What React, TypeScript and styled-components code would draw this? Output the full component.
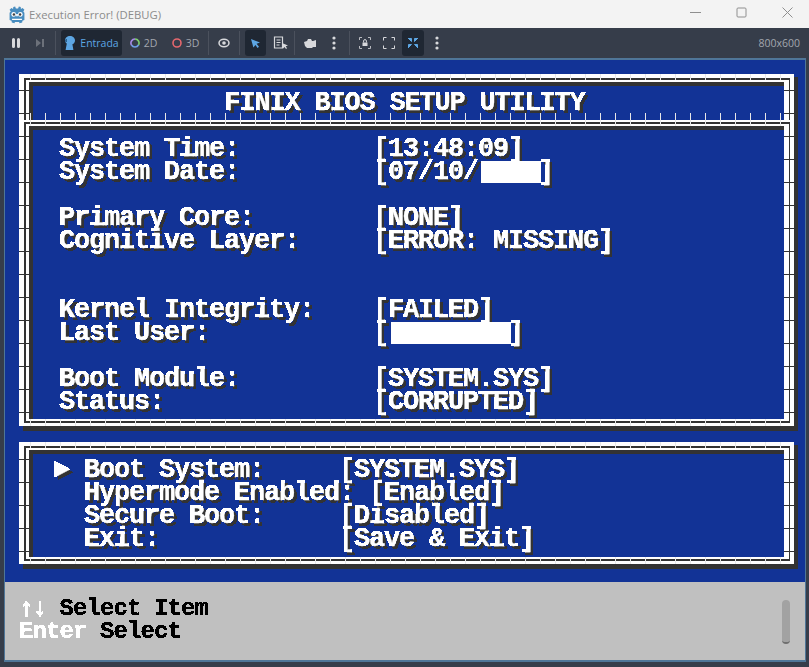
import styled, { createGlobalStyle } from "styled-components";

const GlobalStyle = createGlobalStyle`
  html, body {
    margin: 0;
    padding: 0;
    background: #363d4a;
    overflow: hidden;
  }
`;

const Window = styled.div`
  width: 809px;
  height: 667px;
  display: flex;
  flex-direction: column;
  background: #363d4a;
  overflow: hidden;
`;

const TitleBar = styled.div`
  height: 28px;
  background: #f3f3f3;
  display: flex;
  align-items: center;
  padding-left: 7px;
  font-family: "Open Sans", "Liberation Sans", sans-serif;
  font-size: 11.3px;
  color: #8c8c8c;
`;

const TitleText = styled.span`
  margin-left: 2px;
  flex: 1;
`;

const WindowButton = styled.div`
  width: 46px;
  height: 24px;
  box-sizing: border-box;
  padding-left: 2px;
  display: flex;
  align-items: center;
  justify-content: center;
  margin-top: -4px;
  color: #8f8f8f;
`;

const Toolbar = styled.div`
  height: 30px;
  display: flex;
  align-items: center;
  padding: 0 9px 0 5px;
  font-family: "Open Sans", "Liberation Sans", sans-serif;
  font-size: 10.5px;
  color: #a3a7ae;
`;

const ToolGroup = styled.div<{ $gap?: number }>`
  display: flex;
  align-items: center;
  gap: ${({ $gap }) => $gap ?? 2}px;
`;

const ToolButton = styled.div<{ $w?: number; $active?: boolean }>`
  width: ${({ $w }) => $w ?? 22}px;
  height: 26px;
  display: flex;
  align-items: center;
  justify-content: center;
  gap: 4px;
  border-radius: 3px;
  background: ${({ $active }) => ($active ? "#1f2733" : "transparent")};
  color: ${({ $active }) => ($active ? "#5da6e3" : "inherit")};
`;

const ToolSeparator = styled.div<{ $l: number; $r: number }>`
  width: 1px;
  height: 24px;
  background: #4b515d;
  margin: 0 ${({ $r }) => $r}px 0 ${({ $l }) => $l}px;
`;

const ResolutionLabel = styled.span`
  margin-left: auto;
`;

const Viewport = styled.div`
  width: 800px;
  height: 600px;
  margin-left: 4px;
  border: solid #4f7698;
  border-width: 2px 1px 2px 1px;
  display: flex;
  flex-direction: column;
`;

const BlueScreen = styled.div`
  height: 522px;
  box-sizing: border-box;
  padding: 14px 11px 0 14px;
  background: #123396;
  color: #ffffff;
  font-family: "Liberation Mono", monospace;
  font-weight: bold;
  font-size: 27px;
  letter-spacing: -1.2px;
  line-height: 23px;
  white-space: pre;
`;

const BoxOuter = styled.div<{ $tight?: boolean; $open?: boolean; $seam?: number; $gapAbove?: number }>`
  position: relative;
  margin-top: ${({ $gapAbove }) => $gapAbove ?? 0}px;
  border: solid #ffffff;
  border-width: ${({ $tight, $open }) => `${$tight ? 2 : 4}px 4px ${$open ? 0 : 3}px 5px`};
  box-shadow: 4px 3px 0 #333333, 4px 5px 0 #333333;

  /* seams between the box-drawing tiles */
  &::before {
    content: "";
    position: absolute;
    pointer-events: none;
    z-index: 1;
    inset: ${({ $tight, $open }) => `${$tight ? -2 : -4}px -4px ${$open ? 0 : -3}px -5px`};
    background-image:
      linear-gradient(to bottom, transparent 22px, #333333 22px),
      linear-gradient(to bottom, transparent 22px, #333333 22px),
      linear-gradient(to right, #e8e8e8 1px, transparent 1px),
      linear-gradient(to right, #e8e8e8 1px, transparent 1px);
    background-size: 10px 23px, 10px 23px, 15px 6px, 15px 7px;
    background-repeat: repeat-y, repeat-y, repeat-x, repeat-x;
    background-position:
      0 ${({ $seam }) => $seam ?? -6}px,
      100% ${({ $seam }) => $seam ?? -6}px,
      11px 0,
      11px 100%;
  }
`;

const BoxMiddle = styled.div<{ $open?: boolean }>`
  border: solid #333333;
  border-width: ${({ $open }) => `2px 1px ${$open ? 0 : 2}px 2px`};
`;

const BoxInner = styled.div<{ $open?: boolean }>`
  border: solid #ffffff;
  border-width: ${({ $open }) => `2px 5px ${$open ? 0 : 2}px 3px`};
`;

const BoxContent = styled.div<{ $h: number; $pad: string }>`
  box-sizing: border-box;
  height: ${({ $h }) => $h + 4}px;
  border-top: 4px solid #333333;
  border-left: 4px solid #333333;
  padding: ${({ $pad }) => $pad};
  background: #123396;
`;

const Crisp = styled.div`
  filter: url(#crisp-edges);
  text-shadow: 3px 3px 0 #333333;
  -webkit-text-stroke: 0.35px currentColor;
`;

const HeaderText = styled(Crisp)`
  text-align: center;
  padding-right: 8px;
`;

const InfoGrid = styled(Crisp)`
  display: grid;
  grid-template-columns: 314px 1fr;
  grid-auto-rows: 23px;
`;

const Redacted = styled.span<{ $chars: number }>`
  display: inline-block;
  vertical-align: top;
  width: ${({ $chars }) => $chars * 15}px;
  height: 22px;
  margin: 0 -3px 0 3px;
  background: #ffffff;
`;

const BlankRow = styled.div`
  grid-column: 1 / -1;
`;

const MenuRow = styled.div``;

const StatusPanel = styled.div`
  height: 78px;
  box-sizing: border-box;
  padding: 15px 15px 0 14px;
  background: #c0c0c0;
  color: #000000;
  display: flex;
  justify-content: space-between;
  align-items: flex-start;
  font-family: "Liberation Mono", monospace;
  font-weight: bold;
  font-size: 24px;
  letter-spacing: -0.9px;
  line-height: 23px;
  white-space: pre;
`;

const KeyHints = styled(Crisp)`
  text-shadow: none;
`;

const HintKey = styled.span`
  color: #ffffff;
`;

const HintArrows = styled(HintKey)`
  -webkit-text-stroke: 1.4px #ffffff;
`;

const ScrollThumb = styled.div`
  width: 8px;
  height: 44px;
  margin: 3px 0 0 0;
  border-radius: 4px;
  background: #a2a2a2;
  border-bottom: 2px solid #6f6f6f;
  box-sizing: border-box;
`;

const HiddenDefs = styled.svg`
  position: absolute;
  width: 0;
  height: 0;
`;

function GodotLogo() {
  return (
    <svg width="20" height="21" viewBox="0 0 16 17">
      <path d="M5 2.5 6.5 2l.6 1.6h1.8L9.5 2l1.5.5.2 1.6 1.3-.9 1.5 1.4-.9 1.4.9 1v6l-1.6.6-.2 1.4-2.2.6-.3-1.1H6.3l-.3 1.1-2.2-.6-.2-1.4L2 13V7l.9-1-.9-1.4 1.5-1.4 1.3.9z" fill="#478cbf" />
      <circle cx="5.3" cy="8.4" r="1.9" fill="#fff" />
      <circle cx="10.7" cy="8.4" r="1.9" fill="#fff" />
      <circle cx="5.5" cy="8.5" r="1" fill="#414042" />
      <circle cx="10.5" cy="8.5" r="1" fill="#414042" />
      <path d="M7.3 8h1.4v2H7.3zM4 12h8v1H4z" fill="#fff" />
    </svg>
  );
}

function MinimizeIcon() {
  return (
    <svg width="11" height="11" viewBox="0 0 11 11"><path d="M0 5.5h11" stroke="currentColor" fill="none" /></svg>
  );
}

function MaximizeIcon() {
  return (
    <svg width="11" height="11" viewBox="0 0 11 11"><rect x="1" y="1" width="9" height="9" rx="1" stroke="currentColor" fill="none" /></svg>
  );
}

function CloseIcon() {
  return (
    <svg width="11" height="11" viewBox="0 0 11 11"><path d="M.5.5l10 10M10.5.5l-10 10" stroke="currentColor" fill="none" /></svg>
  );
}

function PauseIcon() {
  return (
    <svg width="10" height="10" viewBox="0 0 10 10"><path d="M1 1.5a1 1 0 0 1 3 0v7a1 1 0 0 1-3 0zM6 1.5a1 1 0 0 1 3 0v7a1 1 0 0 1-3 0z" fill="#d8d9dc" /></svg>
  );
}

function StepIcon() {
  return (
    <svg width="10" height="10" viewBox="0 0 10 10"><path d="M1 1l5 4-5 4zM7 1h2v8H7z" fill="#6c717a" /></svg>
  );
}

function PersonIcon() {
  return (
    <svg width="12" height="16" viewBox="0 0 12 16">
      <path d="M6 1C3.2 1 1 3 1 5.3c0 1.3.6 2.5 1.8 3.3L1.6 15h7.8L8.4 9.2C10 8.6 11 7.2 11 5.4 11 3 8.8 1 6 1z" fill="#5da6e3" />
      <path d="M1 5c.6-.8 1.2-1 2-1v3L1.5 7z" fill="#2c5f8a" />
    </svg>
  );
}

function RingIcon({ color, gradient }: { color?: string; gradient?: boolean }) {
  return (
    <svg width="10" height="10" viewBox="0 0 10 10">
      {gradient ? (
        <>
          <path d="M5 1a4 4 0 0 1 3.5 6" stroke="#7fd16f" strokeWidth="1.6" fill="none" />
          <path d="M8.5 7A4 4 0 0 1 1.5 7" stroke="#6f9fe8" strokeWidth="1.6" fill="none" />
          <path d="M1.5 7A4 4 0 0 1 5 1" stroke="#a98be8" strokeWidth="1.6" fill="none" />
        </>
      ) : (
        <circle cx="5" cy="5" r="4" stroke={color} strokeWidth="1.6" fill="none" />
      )}
    </svg>
  );
}

function EyeIcon() {
  return (
    <svg width="12" height="10" viewBox="0 0 12 10">
      <ellipse cx="6" cy="5" rx="5" ry="3.8" stroke="#d8d9dc" strokeWidth="1.5" fill="none" />
      <circle cx="6" cy="5" r="1.8" fill="#d8d9dc" />
    </svg>
  );
}

function PointerIcon() {
  return (
    <svg width="11" height="11" viewBox="0 0 11 11"><path d="M1 1l9 3.4-3.4 1.4 2.4 3L7.6 10 5.4 7l-2 2.6z" fill="#5da6e3" /></svg>
  );
}

function ListSelectIcon() {
  return (
    <svg width="16" height="14" viewBox="0 0 16 14">
      <path d="M1.5 1h8v11h-8zM3.5 4h4M3.5 6.5h4M3.5 9h3" stroke="#d8d9dc" strokeWidth="1.2" fill="none" />
      <path d="M9 7l6 2.4-2.3.9 1.3 2-1 .7-1.4-2-1.3 1.6z" fill="#d8d9dc" />
    </svg>
  );
}

function CameraIcon() {
  return (
    <svg width="12" height="10" viewBox="0 0 12 10"><path d="M0 4l3-1 1-2h3l1 2h1l3-1v7H9l-1 1H3L1 8z" fill="#d8d9dc" /></svg>
  );
}

function DotsIcon() {
  return (
    <svg width="4" height="14" viewBox="0 0 4 14">
      <circle cx="2" cy="2" r="1.6" fill="#d8d9dc" />
      <circle cx="2" cy="7" r="1.6" fill="#d8d9dc" />
      <circle cx="2" cy="12" r="1.6" fill="#d8d9dc" />
    </svg>
  );
}

function LockFrameIcon() {
  return (
    <svg width="12" height="12" viewBox="0 0 12 12">
      <path d="M.5 3V.5H3M9 .5h2.5V3M11.5 9v2.5H9M3 11.5H.5V9" stroke="#b9bbc0" fill="none" />
      <path d="M3.5 5.5h5v3.5h-5z" fill="#d8d9dc" />
      <path d="M4.6 5.5V4a1.4 1.4 0 0 1 2.8 0v1.5" stroke="#d8d9dc" fill="none" />
    </svg>
  );
}

function ExpandIcon() {
  return (
    <svg width="12" height="12" viewBox="0 0 12 12">
      <path d="M.5 3.5V.5h3M8.5.5h3v3M11.5 8.5v3h-3M3.5 11.5h-3v-3" stroke="#d8d9dc" fill="none" />
    </svg>
  );
}

function ShrinkIcon() {
  return (
    <svg width="12" height="12" viewBox="0 0 12 12">
      <path d="M1 1l3.5 3.5V1.5H1.5zM11 1L7.5 4.5V1.5H10.5zM11 11L7.5 7.5h3v3zM1 11l3.5-3.5h-3v3z" fill="#5da6e3" stroke="#5da6e3" />
    </svg>
  );
}

export default function App() {
  return (
    <Window>
      <GlobalStyle />
      <HiddenDefs aria-hidden="true">
        <filter id="crisp-edges" colorInterpolationFilters="sRGB" x="0" y="0" width="100%" height="100%">
          <feComponentTransfer>
            <feFuncA type="discrete" tableValues="0 1" />
          </feComponentTransfer>
        </filter>
      </HiddenDefs>

      <TitleBar>
        <GodotLogo />
        <TitleText>Execution Error! (DEBUG)</TitleText>
        <WindowButton><MinimizeIcon /></WindowButton>
        <WindowButton><MaximizeIcon /></WindowButton>
        <WindowButton><CloseIcon /></WindowButton>
      </TitleBar>

      <Toolbar>
        <ToolGroup>
          <ToolButton><PauseIcon /></ToolButton>
          <ToolButton><StepIcon /></ToolButton>
        </ToolGroup>
        <ToolSeparator $l={4} $r={5} />
        <ToolGroup $gap={1}>
          <ToolButton $w={61} $active><PersonIcon />Entrada</ToolButton>
          <ToolButton $w={41}><RingIcon gradient />2D</ToolButton>
          <ToolButton $w={41}><RingIcon color="#e5686e" />3D</ToolButton>
        </ToolGroup>
        <ToolSeparator $l={2} $r={4} />
        <ToolButton><EyeIcon /></ToolButton>
        <ToolSeparator $l={4} $r={5} />
        <ToolGroup $gap={4}>
          <ToolButton $w={21} $active><PointerIcon /></ToolButton>
          <ToolButton><ListSelectIcon /></ToolButton>
        </ToolGroup>
        <ToolSeparator $l={2} $r={4} />
        <ToolGroup>
          <ToolButton><CameraIcon /></ToolButton>
          <ToolButton><DotsIcon /></ToolButton>
        </ToolGroup>
        <ToolSeparator $l={4} $r={4} />
        <ToolGroup>
          <ToolButton><LockFrameIcon /></ToolButton>
          <ToolButton><ExpandIcon /></ToolButton>
          <ToolButton $w={22} $active><ShrinkIcon /></ToolButton>
          <ToolButton><DotsIcon /></ToolButton>
        </ToolGroup>
        <ResolutionLabel>800x600</ResolutionLabel>
      </Toolbar>

      <Viewport>
        <BlueScreen>
          <BoxOuter $open>
            <BoxMiddle $open>
              <BoxInner $open>
                <BoxContent $h={34} $pad="6px 0 0 0">
                  <HeaderText>FINIX BIOS SETUP UTILITY</HeaderText>
                </BoxContent>
              </BoxInner>
            </BoxMiddle>
          </BoxOuter>

          <BoxOuter $tight>
            <BoxMiddle>
              <BoxInner>
                <BoxContent $h={289} $pad="8px 0 0 26px">
                  <InfoGrid>
                    <div>System Time:</div>
                    <div>[13:48:09]</div>
                    <div>System Date:</div>
                    <div>[07/10/<Redacted $chars={4} />]</div>
                    <BlankRow />
                    <div>Primary Core:</div>
                    <div>[NONE]</div>
                    <div>Cognitive Layer:</div>
                    <div>[ERROR: MISSING]</div>
                    <BlankRow />
                    <BlankRow />
                    <div>Kernel Integrity:</div>
                    <div>[FAILED]</div>
                    <div>Last User:</div>
                    <div>[<Redacted $chars={8} />]</div>
                    <BlankRow />
                    <div>Boot Module:</div>
                    <div>[SYSTEM.SYS]</div>
                    <div>Status:</div>
                    <div>[CORRUPTED]</div>
                  </InfoGrid>
                </BoxContent>
              </BoxInner>
            </BoxMiddle>
          </BoxOuter>

          <BoxOuter $gapAbove={16} $seam={-5}>
            <BoxMiddle>
              <BoxInner>
                <BoxContent $h={103} $pad="5px 0 0 21px">
                  <Crisp>
                    <MenuRow>{"► Boot System:     [SYSTEM.SYS]"}</MenuRow>
                    <MenuRow>{"  Hypermode Enabled: [Enabled]"}</MenuRow>
                    <MenuRow>{"  Secure Boot:     [Disabled]"}</MenuRow>
                    <MenuRow>{"  Exit:            [Save & Exit]"}</MenuRow>
                  </Crisp>
                </BoxContent>
              </BoxInner>
            </BoxMiddle>
          </BoxOuter>
        </BlueScreen>

        <StatusPanel>
          <KeyHints>
            <div><HintArrows>↑↓</HintArrows> Select Item</div>
            <div><HintKey>Enter</HintKey> Select</div>
          </KeyHints>
          <ScrollThumb />
        </StatusPanel>
      </Viewport>
    </Window>
  );
}
